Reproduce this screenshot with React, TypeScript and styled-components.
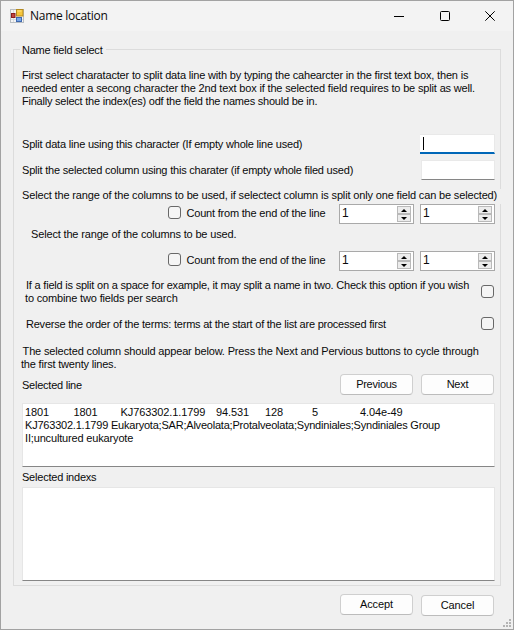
import React from 'react';
import styled, { createGlobalStyle } from 'styled-components';

const GlobalStyle = createGlobalStyle`
  * { box-sizing: border-box; }
  body {
    margin: 0;
    background: #f0f0f0;
    font-family: "Liberation Sans", Arial, sans-serif;
    font-size: 11px;
    line-height: 13px;
    color: #0a0a0a;
  }
`;

const Window = styled.div`
  position: relative;
  display: flex;
  flex-direction: column;
  width: 514px;
  height: 630px;
  background: #f0f0f0;
  border: 1px solid #a2a2a2;
`;

const TitleBar = styled.header`
  display: flex;
  align-items: center;
  height: 30px;
  padding-left: 9px;
  background: #f3f3f3;
`;

const Title = styled.h1`
  flex: 1;
  margin: 0 0 0 6px;
  font: 400 12px/16px "Open Sans", sans-serif;
  letter-spacing: -0.28px;
`;

const Controls = styled.div`
  display: flex;
  padding-right: 5px;
`;

const ControlButton = styled.button`
  display: flex;
  align-items: center;
  justify-content: center;
  width: 46px;
  height: 29px;
  padding: 0;
  border: 0;
  background: transparent;

  &:last-child { width: 36px; margin-left: 4px; }
`;

const GroupBox = styled.section`
  display: flex;
  flex-direction: column;
  width: 488px;
  height: 537px;
  margin: 18px 0 0 12px;
  padding: 0 5px 0 7px;
  border: 1px solid #dcdcdc;
`;

const Legend = styled.h2`
  align-self: flex-start;
  width: 86px;
  margin: -6px 0 0 -1px;
  padding-left: 2px;
  background: #f0f0f0;
  font-size: 11px;
  font-weight: 400;
`;

const Block = styled.div<{ $top: number; $indent?: number }>`
  display: flex;
  flex-direction: column;
  margin-top: ${p => p.$top}px;
  padding-left: ${p => p.$indent ?? 0}px;
`;

const Line = styled.span<{ $track: number; $inset?: number }>`
  display: block;
  height: 13px;
  padding-left: ${p => p.$inset ?? 0}px;
  white-space: pre;
  letter-spacing: ${p => p.$track}px;
`;

const RangeHint = styled.div`
  align-self: flex-start;
  width: 481px;
  height: 15px;
  margin-top: 9px;
  background: #f0f0f0;
`;

const Row = styled.div<{ $top: number; $height: number }>`
  display: flex;
  align-items: flex-start;
  height: ${p => p.$height}px;
  margin-top: ${p => p.$top}px;
`;

const Label = styled.label<{ $top: number; $indent?: number }>`
  flex: 1;
  min-width: 0;
  margin-top: ${p => p.$top}px;
  padding-left: ${p => p.$indent ?? 0}px;
`;

const TextField = styled.div<{ $focused?: boolean }>`
  width: ${p => (p.$focused ? 75 : 74)}px;
  height: 20px;
  padding: 2px 0 0 3px;
  background: #fff;
  border: 1px solid #e9e9e9;
  border-width: ${p => (p.$focused ? '1px 1px 2px 0' : '1px')};
  border-bottom-color: ${p => (p.$focused ? '#0067b8' : '#868686')};
`;

const Caret = styled.div`
  width: 1px;
  height: 13px;
  background: #000;
`;

const CheckBox = styled.span<{ $top: number; $right?: number }>`
  flex: none;
  width: 13px;
  height: 13px;
  margin: ${p => p.$top}px ${p => p.$right ?? 0}px 0 0;
  border: 1px solid #686868;
  border-radius: 3px;
  background: #f5f5f5;
`;

const CountOption = styled.label`
  display: flex;
  ${Line} { margin-top: 1px; }
`;

const Spinner = styled.div`
  display: flex;
  flex: none;
  width: 75px;
  height: 20px;
  margin-left: 6px;
  padding: 1px 2px 1px 2px;
  background: #fff;
  border: 1px solid #a9a9a9;
`;

const SpinnerValue = styled.span`
  flex: 1;
  padding-top: 1px;
  font-size: 12px;
`;

const Arrows = styled.div`
  display: grid;
  grid-template-rows: 8px 8px;
  width: 14px;
`;

const Arrow = styled.button`
  display: flex;
  align-items: center;
  justify-content: center;
  padding: 0;
  background: #ececec;
  border: 1px solid #b9b9b9;
`;

const PushButton = styled.button<{ $top?: number; $track: number }>`
  flex: none;
  width: 73px;
  height: 21px;
  margin: ${p => p.$top ?? 0}px 0 0 8px;
  padding: 0;
  border: 1px solid #cfcfcf;
  border-bottom-color: #bcbcbc;
  border-radius: 4px;
  background: #fdfdfd;
  color: #0a0a0a;
  font: 11px/13px "Liberation Sans", Arial, sans-serif;
  letter-spacing: ${p => p.$track}px;
`;

const Pager = styled.div`
  display: flex;
  padding-right: 1px;
`;

const TextArea = styled.div<{ $top: number; $height: number }>`
  height: ${p => p.$height}px;
  margin: ${p => p.$top}px 0 0 1px;
  padding: 2px 0 0 2px;
  background: #fff;
  border: 1px solid #e6e6e6;
  border-bottom-color: #868686;
`;

const Record = styled.div`
  display: grid;
  grid-template-columns: 48.5px 47px 95.5px 49px 47px 48px auto;
  height: 13px;
`;

const Footer = styled.footer`
  display: flex;
  justify-content: flex-end;
  height: 22px;
  margin-top: 8px;
  padding-right: 19px;
`;

const Grip = styled.svg`
  position: absolute;
  right: 1px;
  bottom: 1px;
`;

const AppIcon = () => (
  <svg width="14" height="14" viewBox="0 0 14 14">
    <rect x=".5" y=".5" width="13" height="13" fill="#f4f4f4" stroke="#b9bec2" />
    <path d="M3.500 1v12M1 10.500h12" stroke="#d9dde0" />
    <rect x="6.500" y=".5" width="6.500" height="6.500" fill="#f5c53b" stroke="#b58a1e" />
    <path d="M7.500 2h4" stroke="#ffe48a" />
    <rect x="1.500" y="4.500" width="3.500" height="4" fill="#c0453f" stroke="#8a1c1c" />
    <rect x="6.500" y="8.500" width="5" height="4" fill="#78a7e8" stroke="#3f68ae" />
  </svg>
);

const NumberSpinner = ({ value }: { value: number }) => (
  <Spinner>
    <SpinnerValue>{value}</SpinnerValue>
    <Arrows>
      <Arrow aria-label="Increase">
        <svg width="6" height="3" viewBox="0 0 6 3"><path d="M0 3L3 0l3 3z" fill="#000" /></svg>
      </Arrow>
      <Arrow aria-label="Decrease">
        <svg width="6" height="3" viewBox="0 0 6 3"><path d="M0 0h6L3 3z" fill="#000" /></svg>
      </Arrow>
    </Arrows>
  </Spinner>
);

const RangeRow = ({ top }: { top: number }) => (
  <Row $top={top} $height={20}>
    <Label $top={2} $indent={147} as="div">
      <CountOption>
        <CheckBox $top={0} $right={5} />
        <Line $track={-0.2} $inset={0.5}>Count from the end of the line</Line>
      </CountOption>
    </Label>
    <NumberSpinner value={1} />
    <NumberSpinner value={1} />
  </Row>
);

const record = ['1801', '1801', 'KJ763302.1.1799', '94.531', '128', '5', '4.04e-49'];

export default function App() {
  return (
    <>
      <GlobalStyle />
      <Window>
        <TitleBar>
          <AppIcon />
          <Title>Name location</Title>
          <Controls>
            <ControlButton aria-label="Minimize">
              <svg width="10" height="10"><path d="M0 5.500h10" stroke="#000" /></svg>
            </ControlButton>
            <ControlButton aria-label="Maximize">
              <svg width="10" height="10"><rect x=".5" y=".5" width="9" height="9" rx="1" fill="none" stroke="#000" /></svg>
            </ControlButton>
            <ControlButton aria-label="Close">
              <svg width="10" height="10"><path d="M.3.3l9.400 9.400M9.700.3L.3 9.700" stroke="#000" /></svg>
            </ControlButton>
          </Controls>
        </TitleBar>

        <GroupBox>
          <Legend><Line $track={-0.23}>Name field select</Line></Legend>

          <Block $top={12}>
            <Line $track={-0.177} $inset={1}>First select charatacter to split data line with by typing the cahearcter in the first text box, then is</Line>
            <Line $track={-0.161} $inset={0.5}>needed enter a secong character the 2nd text box if the selected field requires to be split as well.</Line>
            <Line $track={-0.224} $inset={1}>Finally select the index(es) odf the field the names should be in.</Line>
          </Block>

          <Row $top={26} $height={20}>
            <Label $top={4}><Line $track={-0.2} $inset={1}>Split data line using this character (If empty whole line used)</Line></Label>
            <TextField $focused><Caret /></TextField>
          </Row>
          <Row $top={6} $height={20}>
            <Label $top={4}><Line $track={-0.205} $inset={1}>Split the selected column using this charater (if empty whole filed used)</Line></Label>
            <TextField />
          </Row>

          <RangeHint><Line $track={-0.153} $inset={1}>Select the range of the columns to be used, if selectect column is split only one field can be selected)</Line></RangeHint>
          <RangeRow top={0} />
          <Block $top={4} $indent={9}><Line $track={-0.16} $inset={1}>Select the range of the columns to be used.</Line></Block>
          <RangeRow top={10} />

          <Row $top={8} $height={26}>
            <Label $top={0} $indent={4}>
              <Line $track={-0.208} $inset={1}>If a field is split on a space for example, it may split a name in two. Check this option if you wish</Line>
              <Line $track={-0.16}>to combine two fields per search</Line>
            </Label>
            <CheckBox $top={6} $right={1} />
          </Row>
          <Row $top={12} $height={14}>
            <Label $top={1} $indent={4}><Line $track={-0.228} $inset={1}>Reverse the order of the terms: terms at the start of the list are processed first</Line></Label>
            <CheckBox $top={0} $right={1} />
          </Row>

          <Block $top={14}>
            <Line $track={-0.159} $inset={1.6}>The selected column should appear below. Press the Next and Pervious buttons to cycle through</Line>
            <Line $track={-0.19}>the first twenty lines.</Line>
          </Block>

          <Row $top={3} $height={21}>
            <Label $top={5}><Line $track={-0.24} $inset={1}>Selected line</Line></Label>
            <Pager>
              <PushButton $track={-0.26}>Previous</PushButton>
              <PushButton $track={-0.22}>Next</PushButton>
            </Pager>
          </Row>
          <TextArea $top={8} $height={64}>
            <Record>
              {record.map((cell, i) => <Line key={i} $track={-0.1}>{cell}</Line>)}
            </Record>
            <Line $track={-0.21}>KJ763302.1.1799 Eukaryota;SAR;Alveolata;Protalveolata;Syndiniales;Syndiniales Group</Line>
            <Line $track={-0.16}>II;uncultured eukaryote</Line>
          </TextArea>

          <Block $top={4}><Line $track={-0.22} $inset={1}>Selected indexs</Line></Block>
          <TextArea $top={3} $height={94} />
        </GroupBox>

        <Footer>
          <PushButton $track={-0.1}>Accept</PushButton>
          <PushButton $top={1} $track={-0.14}>Cancel</PushButton>
        </Footer>

        <Grip width="9" height="9" fill="#b4b4b4">
          <path d="M6 0h2v2h-2zM3 3h2v2h-2zM6 3h2v2h-2zM0 6h2v2h-2zM3 6h2v2h-2zM6 6h2v2h-2z" />
        </Grip>
      </Window>
    </>
  );
}
